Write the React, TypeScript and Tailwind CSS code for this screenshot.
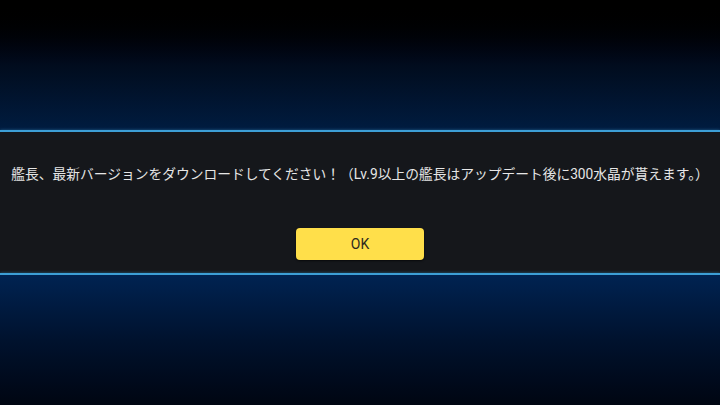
export default function App() {
  return (
    <main
      className="w-[720px] h-[405px] flex flex-col overflow-hidden"
      style={{ fontFamily: 'Roboto, "Noto Sans CJK JP", sans-serif' }}
    >
      {/* upper backdrop */}
      <div className="h-[130px] bg-gradient-to-b from-[#000000] via-[#010c1e] to-[#001c40]" />
      <div className="h-[2px] bg-[#3d9fd6] shadow-[0_0_3px_rgba(61,159,214,0.6)]" />

      {/* message panel */}
      <div className="h-[141px] bg-[#15171b] flex flex-col items-center">
        <p className="mt-[32px] text-[13.75px] leading-[20px] text-[#e6e6e6] whitespace-nowrap">
          艦長、最新バージョンをダウンロードしてください！（Lv.9以上の艦長はアップデート後に300水晶が貰えます。）
        </p>
        <button className="mt-[44px] w-[128px] h-[32px] rounded-[4px] bg-[#ffdf4a] text-[#2e2a1e] text-[14px] shadow-[0_1px_2px_rgba(0,0,0,0.6)]">
          OK
        </button>
      </div>

      <div className="h-[2px] bg-[#3d9fd6] shadow-[0_0_3px_rgba(61,159,214,0.6)]" />
      {/* lower backdrop */}
      <div className="flex-1 bg-gradient-to-b from-[#002352] via-[#00122e] to-[#000612]" />
    </main>
  );
}
